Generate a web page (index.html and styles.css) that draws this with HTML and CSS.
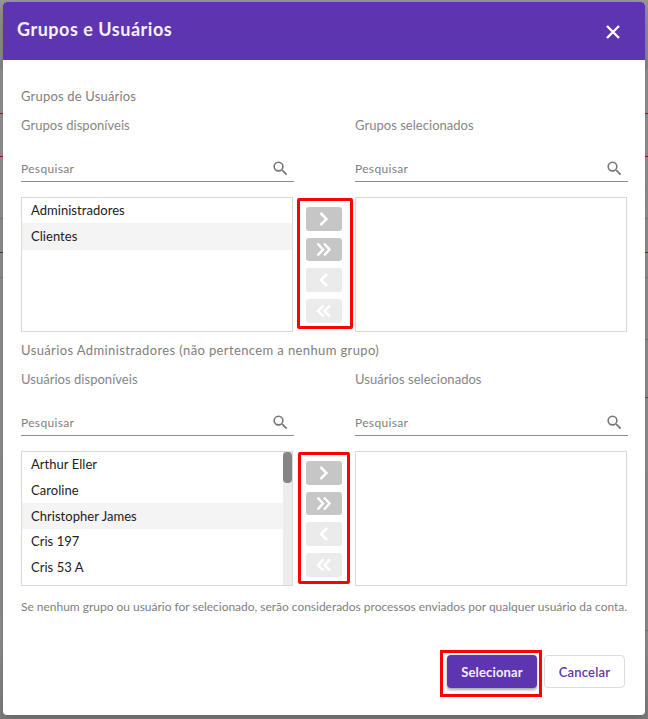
FILE: index.html
```html
<!DOCTYPE html>
<html lang="pt-BR">
<head>
<meta charset="utf-8">
<title>Grupos e Usuários</title>
<link rel="stylesheet" href="styles.css">
</head>
<body>
<svg width="0" height="0" class="defs" aria-hidden="true">
  <symbol id="search" viewBox="0 0 24 24"><path d="M15.5 14h-.79l-.28-.27A6.47 6.47 0 0 0 16 9.500 6.500 6.500 0 1 0 9.500 16c1.610 0 3.090-.59 4.230-1.570l.27.28v.79l5 4.990L20.490 19l-4.990-5zm-6 0A4.500 4.500 0 1 1 14 9.500 4.490 4.490 0 0 1 9.500 14z"/></symbol>
  <symbol id="right" viewBox="0 0 36 24"><path d="M14.500 6l6 6-6 6"/></symbol>
  <symbol id="right2" viewBox="0 0 36 24"><path d="M11.500 5.500l5.500 6-5.500 6M18 5.500l5.500 6-5.500 6"/></symbol>
  <symbol id="left" viewBox="0 0 36 24"><path d="M21 6l-6 6 6 6"/></symbol>
  <symbol id="left2" viewBox="0 0 36 24"><path d="M17.500 6.500l-5.500 5.500 5.500 5.500M24 6.500l-5.500 5.500 5.500 5.500"/></symbol>
</svg>
<div class="page-lines" aria-hidden="true">
  <i class="l1"></i><i class="red l2"></i><i class="l3"></i><i class="l4"></i><i class="l5"></i><i class="right-only l6"></i><i class="right-only dark l7"></i><i class="right-only l8"></i>
</div>
<main class="dialog">
  <header class="header">
    <h1>Grupos e Usuários</h1>
    <svg class="close" viewBox="0 0 16 16"><path d="M2 2l12 12M14 2l-12 12"/></svg>
  </header>
  <div class="content">
    <section class="picker">
      <h2 class="t-groups">Grupos de Usuários</h2>
      <div class="columns">
        <div class="column">
          <h3>Grupos disponíveis</h3>
          <div class="search"><span>Pesquisar</span><svg><use href="#search"/></svg></div>
          <ul class="list"><li>Administradores</li><li class="active">Clientes</li></ul>
        </div>
        <div class="transfer">
          <div class="highlight wide">
            <button><svg><use href="#right"/></svg></button>
            <button><svg><use href="#right2"/></svg></button>
            <button class="off"><svg><use href="#left"/></svg></button>
            <button class="off"><svg><use href="#left2"/></svg></button>
          </div>
        </div>
        <div class="column">
          <h3>Grupos selecionados</h3>
          <div class="search"><span>Pesquisar</span><svg><use href="#search"/></svg></div>
          <ul class="list"></ul>
        </div>
      </div>
    </section>
    <section class="picker">
      <h2 class="t-users">Usuários Administradores (não pertencem a nenhum grupo)</h2>
      <div class="columns">
        <div class="column">
          <h3>Usuários disponíveis</h3>
          <div class="search"><span>Pesquisar</span><svg><use href="#search"/></svg></div>
          <ul class="list scroll"><li>Arthur Eller</li><li>Caroline</li><li class="active">Christopher James</li><li>Cris 197</li><li>Cris 53 A</li></ul>
        </div>
        <div class="transfer">
          <div class="highlight">
            <button><svg><use href="#right"/></svg></button>
            <button><svg><use href="#right2"/></svg></button>
            <button class="off"><svg><use href="#left"/></svg></button>
            <button class="off"><svg><use href="#left2"/></svg></button>
          </div>
        </div>
        <div class="column">
          <h3>Usuários selecionados</h3>
          <div class="search"><span>Pesquisar</span><svg><use href="#search"/></svg></div>
          <ul class="list"></ul>
        </div>
      </div>
    </section>
    <p class="note">Se nenhum grupo ou usuário for selecionado, serão considerados processos enviados por qualquer usuário da conta.</p>
  </div>
  <footer class="actions">
    <div class="highlight-action"><button class="primary">Selecionar</button></div>
    <button class="cancel">Cancelar</button>
  </footer>
</main>
</body>
</html>
```
FILE: styles.css
```css
* { box-sizing: border-box; }
body {
  margin: 0;
  height: 719px;
  overflow: hidden;
  padding: 2px 3px 4px;
  background: linear-gradient(#999 0, #8c8c8c 69px, #969696 70px, #929292 640px, #808080 719px);
  font-family: Lato, "Open Sans", sans-serif;
  font-size: 13px;
  color: #212121;
}
.defs { position: absolute; }
h1, h2, h3, p, ul { margin: 0; padding: 0; font-weight: 400; }
button { font-family: inherit; padding: 0; border: 0; }
.page-lines i { position: absolute; left: 0; width: 648px; height: 1px; background: #7c7c7c; }
.page-lines .dark { background: #555; }
.page-lines .red { background: #952525; }
.page-lines .l1 { top: 113px; background: #812b2b; }
.page-lines .l2 { top: 156px; }
.page-lines .l3 { top: 218px; }
.page-lines .l4 { top: 252px; background: #44425c; }
.page-lines .l5 { top: 277px; }
.page-lines .right-only { left: 640px; width: 8px; }
.page-lines .l6 { top: 339px; }
.page-lines .l7 { top: 397px; }
.page-lines .l8 { top: 630px; }
.dialog {
  position: relative;
  width: 642px;
  height: 713px;
  border-radius: 4px;
  overflow: hidden;
  background: #fff;
  box-shadow: 0 4px 12px rgba(0, 0, 0, .25);
}
.header {
  height: 58px;
  padding: 0 24px 0 14px;
  display: flex;
  align-items: center;
  justify-content: space-between;
  background: #5e35b1;
  color: #fff;
}
h1 { font-size: 18px; line-height: 24px; font-weight: 700; letter-spacing: .52px; padding-bottom: 4px; color: #f4effb; }
.close { width: 16px; height: 16px; margin-top: 2px; fill: none; stroke: #fff; stroke-width: 2.4; }
.content { padding: 26px 17px 0 18px; }
.picker { height: 254px; }
h2 { height: 29px; line-height: 20px; font-size: 13px; color: #808080; white-space: nowrap; }
.t-groups { letter-spacing: .18px; }
.t-users { letter-spacing: .38px; }
.columns { display: grid; grid-template-columns: 273px 61px 273px; }
h3 { height: 42px; line-height: 20px; font-size: 13px; letter-spacing: .03px; color: #868686; white-space: nowrap; }
.search {
  height: 25px;
  border-bottom: 1px solid #8d8d8d;
  display: flex;
  justify-content: space-between;
  line-height: 24px;
  font-size: 12px;
  letter-spacing: .32px;
  color: #808080;
}
.search svg { width: 19px; height: 19px; margin: 2px 4px 0 0; fill: #757575; }
.list {
  position: relative;
  width: 272px;
  height: 135px;
  margin-top: 15px;
  border: 1px solid #d9d9d9;
  list-style: none;
  overflow: hidden;
}
.list li { height: 25.700px; line-height: 25px; padding-left: 9px; letter-spacing: .04px; white-space: nowrap; }
.list li:first-child { height: 25.400px; }
.list li:nth-child(2), .list li:nth-child(3) { line-height: 27px; }
.list .active { height: 26.200px; background: #f4f4f4; }
.scroll { background: linear-gradient(#ececec, #ececec) right / 9px 100% no-repeat; }
.scroll li { margin-right: 9px; }
.scroll::after { content: ""; position: absolute; top: 0; right: 0; width: 9px; height: 31px; border-radius: 4px; background: #858585; }
.transfer { padding: 83px 0 0 4px; }
.highlight {
  width: 52px;
  height: 132px;
  padding: 6px 5px;
  border: 3px solid #f00;
  border-radius: 2px;
  display: flex;
  flex-direction: column;
  gap: 7.200px;
}
.highlight.wide { width: 56px; height: 131px; margin-left: -1px; padding-left: 6px; }
.highlight button { width: 36px; height: 23.500px; flex: none; border-radius: 3px; background: #c6c6c6; }
.highlight .off { background: #ebebeb; }
.highlight svg { display: block; width: 36px; height: 24px; fill: none; stroke: #fff; stroke-width: 2.500; }
.note { height: 20px; margin-top: 3px; line-height: 20px; font-size: 12px; letter-spacing: -.02px; color: #808080; white-space: nowrap; }
.actions { display: flex; justify-content: flex-end; padding: 33px 20px 0 0; }
.highlight-action { width: 102px; height: 47px; margin-right: 2px; padding: 2px 4px; border: 3px solid #f00; }
.actions button { height: 33px; border-radius: 4px; font-size: 13px; }
.primary { width: 90px; font-weight: 700; letter-spacing: .15px; color: #f4effb; background: #5e35b1; box-shadow: 0 2px 3px rgba(0, 0, 0, .35); }
.cancel { width: 81px; margin-top: 5px; font-weight: 600; letter-spacing: .2px; color: #5e35b1; background: #fff; border: 1px solid #ddd !important; }
```
